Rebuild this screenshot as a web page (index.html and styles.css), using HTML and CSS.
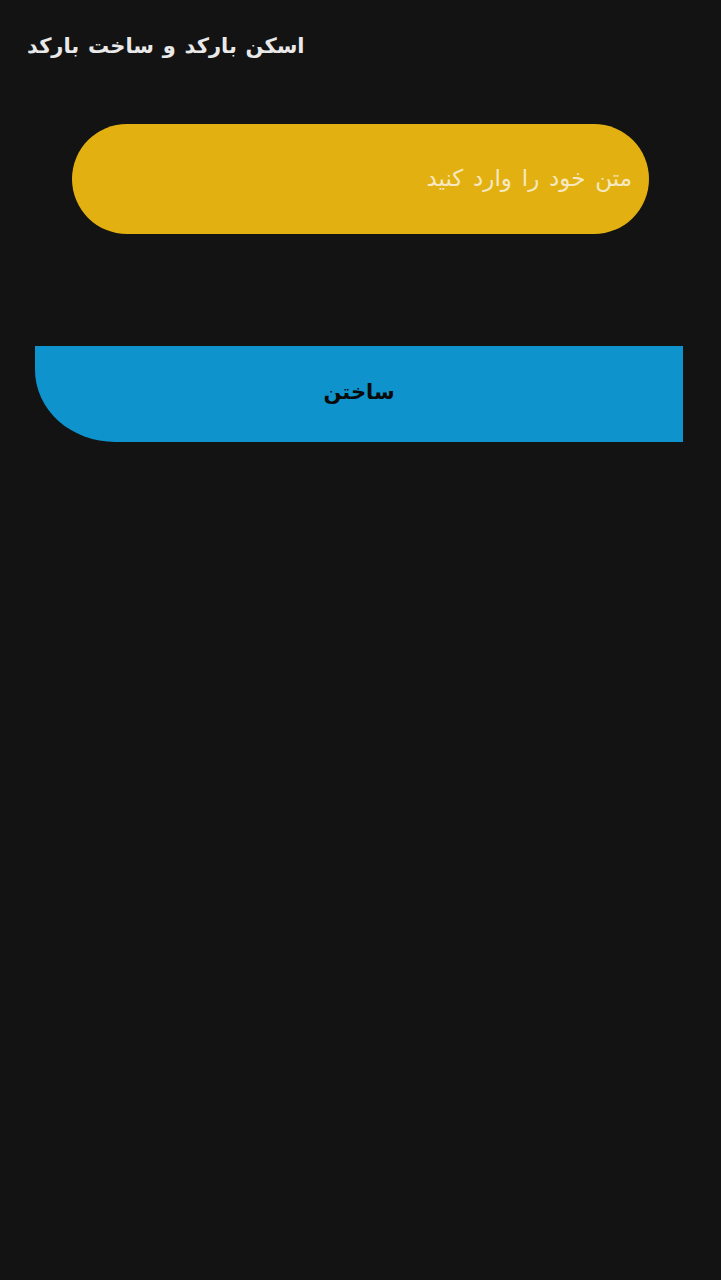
FILE: index.html
```html
<!DOCTYPE html>
<html lang="fa">
<head>
<meta charset="utf-8">
<link rel="stylesheet" href="styles.css">
</head>
<body>
<div class="app">
  <header class="toolbar">
    <h1 class="title">اسکن بارکد و ساخت بارکد</h1>
  </header>
  <main class="content">
    <div class="input-wrap">
      <div class="input" dir="rtl">متن خود را وارد کنید</div>
    </div>
    <div class="button-wrap">
      <button class="make-btn" type="button">ساختن</button>
    </div>
  </main>
</div>
</body>
</html>
```

FILE: styles.css
```css
html, body {
  margin: 0;
  padding: 0;
  background: #131313;
}
.app {
  width: 721px;
  min-height: 1280px;
  background: #131313;
  display: flex;
  flex-direction: column;
  font-family: "DejaVu Sans", "Noto Sans", sans-serif;
}
.toolbar {
  height: 92px;
  display: flex;
  align-items: center;
  padding-left: 27px;
  box-sizing: border-box;
}
.title {
  margin: 0;
  font-size: 21px;
  font-weight: bold;
  color: #e9e9e9;
  direction: rtl;
  word-spacing: 1.5px;
}
.content {
  display: flex;
  flex-direction: column;
}
.input-wrap {
  padding-top: 32px;
  padding-left: 72px;
}
.input {
  width: 577px;
  height: 110px;
  border-radius: 55px;
  background: #e3b011;
  color: #f6e9c2;
  font-size: 23px;
  word-spacing: 2.5px;
  display: flex;
  align-items: center;
  padding-right: 17px;
  padding-bottom: 2px;
  box-sizing: border-box;
}
.button-wrap {
  padding-top: 112px;
  padding-left: 35px;
}
.make-btn {
  width: 648px;
  height: 96px;
  border: none;
  background: #0e93cc;
  border-bottom-left-radius: 80px 72px;
  color: #0a0a0a;
  font-family: "DejaVu Sans", "Noto Sans", sans-serif;
  font-size: 21px;
  font-weight: bold;
  display: flex;
  align-items: center;
  justify-content: center;
  padding: 0 0 4px 0;
}
```
